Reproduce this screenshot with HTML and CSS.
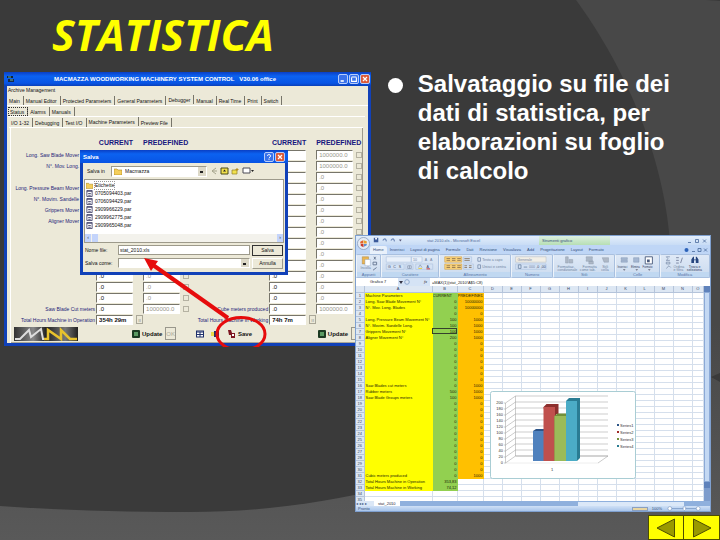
FILE: index.html
```html
<!DOCTYPE html>
<html lang="it">
<head>
<meta charset="utf-8">
<meta name="viewport" content="width=device-width, initial-scale=1">
<title>Statistica</title>
<link rel="stylesheet" href="styles.css">
</head>
<body>
<main class="slide">
  <svg class="backdrop" viewBox="0 0 720 540" preserveAspectRatio="none" aria-hidden="true">
    <defs>
      <linearGradient id="outer" x1="0" y1="0" x2="0" y2="1"><stop offset="0" stop-color="#484848"/><stop offset=".6" stop-color="#484848"/><stop offset="1" stop-color="#595959"/></linearGradient>
    </defs>
    <rect width="720" height="540" fill="url(#outer)"/>
    <path d="M0 0H576C620 60 671 160 671 270C671 400 430 512 190 512C120 512 60 510 0 506Z" fill="#3a3a3a"/>
    <path d="M706 0H720V1ZM711 377L720 373V382Z" fill="#3a3a3a"/>
  </svg>
  <h1 class="title">STATISTICA</h1>
  <ul class="notes"><li>Salvataggio su file dei dati di statistica, per elaborazioni su foglio di calcolo</li></ul>

  <section class="app">
    <header class="app-bar">
      <svg class="app-icon" viewBox="0 0 8 8"><path d="M0 1h6v2H0z" fill="#123"/><path d="M1 4h6v3H1z" fill="#152a4a"/><path d="M1 2h3M3 5h3" stroke="#6db5a0"/></svg>
      <h2>MACMAZZA WOODWORKING MACHINERY SYSTEM CONTROL &nbsp; V30.06 office</h2>
      <div class="win-buttons">
        <button type="button"><svg viewBox="0 0 10 10"><path d="M2 7.5h4" stroke="#fff" stroke-width="2"/></svg></button>
        <button type="button"><svg viewBox="0 0 10 10"><path d="M2 2.5h6M2 3v5h6V3" stroke="#fff" fill="none" stroke-width="1.4"/></svg></button>
        <button type="button" class="close"><svg viewBox="0 0 10 10"><path d="M2.5 2.5l5 5M7.500 2.500l-5 5" stroke="#fff" stroke-width="1.500"/></svg></button>
      </div>
    </header>
    <div class="menu">Archive Management</div>
    <nav class="tabs"><button type="button">Main</button><button type="button">Manual Editor</button><button type="button">Protected Parameters</button><button type="button">General Parameters</button><button type="button" class="on">Debugger</button><button type="button">Manual</button><button type="button">Real Time</button><button type="button">Print</button><button type="button">Switch</button></nav>
    <nav class="tabs sub"><button type="button" class="focus">Status</button><button type="button">Alarms</button><button type="button">Manuals</button></nav>
    <nav class="tabs sub2"><button type="button">I/O 1-32</button><button type="button">Debugging</button><button type="button">Test I/O</button><button type="button" class="on">Machine Parameters</button><button type="button">Preview File</button></nav>
    <div class="panel">
      <div class="pair heads"><div class="half"><b class="cur">CURRENT</b><b class="pre">PREDEFINED</b></div><div class="half"><b class="cur">CURRENT</b><b class="pre">PREDEFINED</b></div></div>
      <div id="params"></div>
      <footer class="actions">
        <svg class="logo" viewBox="0 0 64 14"><defs><linearGradient id="lg"><stop offset="0" stop-color="#333"/><stop offset=".3" stop-color="#888"/><stop offset=".5" stop-color="#222"/><stop offset=".8" stop-color="#777"/><stop offset="1" stop-color="#222"/></linearGradient></defs><rect width="64" height="14" fill="url(#lg)"/><path d="M1 12h5L15 3l2 7 10-8 2 10h4" fill="none" stroke="#ddd" stroke-width="2"/><path d="M30 12h4V3l13 9V3l9 9h7" fill="none" stroke="#e8c22c" stroke-width="2.500"/></svg>
        <button type="button" class="update"><svg viewBox="0 0 8 8"><rect width="8" height="8" rx="1" fill="#1c3a22"/><path d="M2 2h4v4H2z" fill="#5a9a62"/></svg>Update</button>
        <button type="button" class="ok" disabled>OK</button>
        <span class="tools"><svg viewBox="0 0 8 8"><rect x=".5" y="1" width="7" height="6" fill="#fff" stroke="#1d2f6b"/><path d="M0 2h8M1 4.500h6M4 2v5" stroke="#1d2f6b"/></svg><svg viewBox="0 0 8 8"><path d="M0 2h3v4H0z" fill="#ecd94a"/><path d="M3 1h5v6H3z" fill="#1d2f6b"/></svg></span>
        <button type="button" class="save"><svg viewBox="0 0 8 8"><path d="M0 0h3l1 3h3v5H3V5H1z" fill="#7d1520"/><path d="M4 4h2v2H4z" fill="#fff"/></svg>Save</button>
        <button type="button" class="update last"><svg viewBox="0 0 8 8"><rect width="8" height="8" rx="1" fill="#1c3a22"/><path d="M2 2h4v4H2z" fill="#5a9a62"/></svg>Update</button>
        <button type="button" class="ok" disabled></button>
      </footer>
    </div>

    <form class="dialog">
      <header class="dialog-bar"><h3>Salva</h3><div class="win-buttons"><button type="button"><svg viewBox="0 0 10 10"><path d="M3 3.500q0-1.500 2-1.500t2 1.500-2 2.500M5 7v1.500" fill="none" stroke="#fff" stroke-width="1.200"/></svg></button><button type="button" class="close"><svg viewBox="0 0 10 10"><path d="M2.500 2.500l5 5M7.500 2.500l-5 5" stroke="#fff" stroke-width="1.500"/></svg></button></div></header>
      <div class="where">
        <label for="folder">Salva in</label>
        <span class="pick"><svg class="folder" viewBox="0 0 8 7"><path d="M0 1h3l1 1h4v5H0z" fill="#f5cf5b" stroke="#a98520" stroke-width=".6"/></svg><select id="folder"><option>Macmazza</option></select></span>
        <svg class="nav-icons" viewBox="0 0 44 8"><path d="M5 1L1 4l4 3M1 4h5" stroke="#a6a58d" fill="none"/><path d="M10 1h7v6h-7z" fill="#f2e14c" stroke="#4a4a18"/><path d="M12 4.500l1.500-2 1.500 2z" fill="#222"/><path d="M21 3h5v4h-5z" fill="#f2e14c" stroke="#8f812c" stroke-width=".7"/><path d="M26 1v3M24.500 2.500h3" stroke="#b68f20"/><path d="M32 1h7v5h-7z" fill="#fff" stroke="#4a4a55"/><path d="M40 3h3l-1.500 2z" fill="#222"/></svg>
      </div>
      <div class="list">
        <ul id="files"></ul>
        <div class="hscroll"><i>‹</i><b></b><i class="end">›</i></div>
      </div>
      <div class="line"><label for="fname">Nome file:</label><input id="fname" type="text" value="stat_2010.xls"><button type="button" class="default">Salva</button></div>
      <div class="line"><label for="ftype">Salva come:</label><span class="pick wide"><select id="ftype"><option></option></select></span><button type="button">Annulla</button></div>
    </form>
    <svg class="pointer" viewBox="0 0 366 275" aria-hidden="true"><path d="M224 246L149 193" stroke="#e60c0c" stroke-width="4"/><path d="M140 186L154 189 147 199Z" fill="#e60c0c"/><ellipse cx="237" cy="262" rx="24" ry="16.500" fill="none" stroke="#e60c0c" stroke-width="3"/></svg>
  </section>

  <section class="excel">
    <header class="xl-title">
      <svg class="quick" viewBox="0 0 50 10"><path d="M17 2h5v5h-5z" fill="#3c5a9a"/><path d="M18.500 2h2v2h-2z" fill="#fff"/><path d="M27 5q3-4 4 1M36 5q3-4 4 1" fill="none" stroke="#6984b5" stroke-width="1.300"/><path d="M45 4h3l-1.500 2z" fill="#557"/></svg>
      <h2>stat 2010.xls - Microsoft Excel</h2>
      <span class="context">Strumenti grafico</span>
      <svg class="xl-win" viewBox="0 0 20 8"><path d="M1 5.500h3M8.500 2.500h3v3h-3zM16 2.500l3 3M19 2.500l-3 3" fill="none" stroke="#49699c" stroke-width=".8"/></svg>
    </header>
    <nav class="xl-tabs"><button type="button" class="on">Home</button><button type="button">Inserisci</button><button type="button">Layout di pagina</button><button type="button">Formule</button><button type="button">Dati</button><button type="button">Revisione</button><button type="button">Visualizza</button><button type="button">Add</button><button type="button">Progettazione</button><button type="button">Layout</button><button type="button">Formato</button>
      <svg viewBox="0 0 24 8"><circle cx="2.500" cy="4" r="2" fill="#2b62b8"/><path d="M8 5.500h3M14 2.500h3v3h-3zM20 2.500l3 3M23 2.500l-3 3" fill="none" stroke="#49699c" stroke-width=".8"/></svg></nav>
    <svg class="orb" viewBox="0 0 14 14" aria-hidden="true"><circle cx="7" cy="7" r="6.500" fill="#e5ebf4" stroke="#8497b5" stroke-width=".8"/><path d="M3.500 5l3-1.500v3.500h-3z" fill="#e5602a"/><path d="M7 3.500l3.500 1V7H7z" fill="#e9a12e"/><path d="M4 7.500h3V11L4 9.500z" fill="#c93a2a"/><path d="M7.500 7.500h3V9l-3 1.500z" fill="#5a8fd0"/></svg>
    <div class="ribbon">
      <div class="group g1"><div class="art"><svg viewBox="0 0 24 19"><path d="M5 2h7v8H5z" fill="#eab552" stroke="#a6803c" stroke-width=".5"/><path d="M8 5h6v7H8z" fill="#fff" stroke="#8aa0c0" stroke-width=".5"/><path d="M18 2l2 3M20 2l-2 3M17 8h4v3h-4zM17 17l4-3" stroke="#64748f" fill="none"/><text x="3" y="16">Incolla</text></svg></div><span>Appunti</span></div>
      <div class="group g2"><div class="art"><svg viewBox="0 0 57 19"><path d="M2 2h28v6H2zM30 2h12v6H30z" fill="#eaf1fa" stroke="#a7bedd" stroke-width=".6"/><text x="32" y="7">10</text><text x="45" y="7">A</text><text x="51" y="7">A</text><path d="M2 10h20v6H2zM24 10h8v6h-8zM35 10h19v6H35z" fill="#d4e2f4" stroke="#a7bedd" stroke-width=".6"/><text x="4" y="15" class="dk">G</text><text x="10" y="15" class="dk">C</text><text x="16" y="15" class="dk">S</text><path d="M26 12h4v3h-4zM28 12v3M38 14l2-3 2 3" stroke="#6c7c98" fill="none" stroke-width=".6"/><path d="M38 15h4" stroke="#edcf2a"/><text x="47" y="15" class="dk">A</text><path d="M47 15.500h4" stroke="#d02a2a"/></svg></div><span>Carattere</span></div>
      <div class="group g3"><div class="art"><svg viewBox="0 0 72 19"><path d="M2 2h19v6H2zM2 10h19v6H2z" fill="#fbd47c" stroke="#d09b3d" stroke-width=".6"/><path d="M23 2h9v6h-9zM23 10h11v6H23z" fill="#d4e2f4" stroke="#a7bedd" stroke-width=".6"/><path d="M4 4h4M4 6h4M10 4h4M10 6h4M16 4h4M16 6h4M4 12h4M4 14h4M10 12h4M10 14h4M16 12h4M16 14h4M24 4h6M24 6h6M24 12h3M24 14h3M29 12h3M29 14h3" stroke="#775f43" stroke-width=".8"/><path d="M39 3h3v4h-3zM39 11h3v4h-3z" fill="none" stroke="#8296b5"/><text x="44" y="7">Testo a capo</text><text x="44" y="15">Unisci e centra</text></svg></div><span>Allineamento</span></div>
      <div class="group g4"><div class="art"><svg viewBox="0 0 40 19"><path d="M2 2h34v6H2z" fill="#f2efe7" stroke="#b8bcc2" stroke-width=".6"/><text x="4" y="7">Generale</text><path d="M2 10h34v6H2z" fill="#d4e2f4" stroke="#a7bedd" stroke-width=".6"/><path d="M5 11v4h3v-4zM11 13.500h4" fill="none" stroke="#748ba9"/><text x="17" y="15">000</text><text x="25" y="15" class="dk">,0</text><text x="30" y="15" class="dk">,00</text></svg></div><span>Numero</span></div>
      <div class="group g5"><div class="art"><svg viewBox="0 0 62 19"><path d="M10 2h3v7h-3zM14 5h4v4h-4zM33 2h7v2h-7zM33 5h7v2h-7zM36 7h5v3h-5zM51 3h7v5h-5z" fill="#aeb8c6" stroke="#8c99ac" stroke-width=".5"/><text x="1" y="14">Formattaz.</text><text x="1" y="18">condizionale</text><text x="29" y="14">Formatta</text><text x="26" y="18">come tab.</text><text x="51" y="14">Stili</text><text x="50" y="18">cella</text></svg></div><span>Stili</span></div>
      <div class="group g6"><div class="art"><svg viewBox="0 0 44 19"><path d="M4 3h7v2H4zM4 6h7v2H4zM18 3h6v5h-6z" fill="#a5b7d2" stroke="#7e92b0" stroke-width=".5"/><path d="M31 2h8v8h-8z" fill="#fff" stroke="#47587a"/><path d="M33 5h3v3h-3z" fill="#47587a"/><text x="0" y="14" class="sm">Inserisci</text><text x="15" y="14" class="sm">Elimina</text><text x="28" y="14" class="sm">Formato</text><path d="M6 16h3l-1.500 1.500zM20 16h3l-1.500 1.500zM34 16h3l-1.500 1.500z" fill="#667"/></svg></div><span>Celle</span></div>
      <div class="group g7"><div class="art"><svg viewBox="0 0 48 19"><path d="M7 2H3l2 2-2 2h4M3 8h4v2H3zM3 15l3-3 2 2" fill="none" stroke="#7487a4" stroke-width=".8"/><path d="M14 3h3M14 6h3M14 9h3M21 3l-2 6" stroke="#75809b"/><path d="M31 9V5l2-3h1v3h2V2h1l2 3v4h-3V6h-2v3z" fill="#27467f"/><text x="11" y="14">Ordina</text><text x="11" y="18">e filtra</text><text x="28" y="14" class="dk">Trova e</text><text x="26" y="18" class="dk">seleziona</text></svg></div><span>Modifica</span></div>
    </div>
    <div class="formula"><label class="namebox" for="fx">Grafico 7</label><span class="fx"><svg viewBox="0 0 6 6"><path d="M1 2h4L3 5z" fill="#334"/></svg><svg viewBox="0 0 6 6"><circle cx="3" cy="3" r="2.300" fill="#dbe6f5" stroke="#8ba5cb"/></svg><em>fx</em></span><input id="fx" type="text" value="=MAX(1)(stat_2010!A$5:C8)"></div>
    <div class="work">
      <div class="sheet-wrap">
        <table class="sheet"><colgroup><col class="c-row"><col class="c-a"><col class="c-b"><col class="c-c"><col span="11" class="c-n"><col></colgroup><thead id="cols"></thead><tbody id="cells"></tbody></table>
        <svg class="chart" viewBox="0 0 146 88">
          <rect x=".5" y=".5" width="145" height="87" rx="2" fill="#fff" stroke="#a9cdd4"/>
          <g id="axis"></g>
          <path d="M15.500 12V72M25.500 5V65H118L108 72" fill="none" stroke="#999" stroke-width=".5"/>
          <path d="M15.500 72H108" stroke="#bbb" stroke-width=".5" stroke-dasharray="1 1"/>
          <path d="M43 40l3-2h10v30H43z" fill="#2c5488"/><path d="M43 40h11v30H43z" fill="#4f81bd"/>
          <path d="M53.500 16l3-3h12v10H66l-3 46z" fill="#8c2f2d"/><path d="M53.500 16H65v54H53.500z" fill="#c0504d"/>
          <path d="M64.500 25l3-2.500H80V70H64.500z" fill="#72903a"/><path d="M64.500 25H76v45H64.500z" fill="#9bbb59"/>
          <path d="M76 10l3-3h11v60l-3 3H76z" fill="#2a7c93"/><path d="M76 10h11v60H76z" fill="#4bacc6"/>
          <text x="61" y="80">1</text>
          <path d="M127 33h2v2h-2z" fill="#2c5488"/><path d="M127 40h2v2h-2z" fill="#a02c2a"/><path d="M127 47h2v2h-2z" fill="#72903a"/><path d="M127 54h2v2h-2z" fill="#2a7c93"/>
          <text x="130" y="36">Series1</text><text x="130" y="43">Series2</text><text x="130" y="50">Series3</text><text x="130" y="57">Series4</text>
        </svg>
      </div>
      <div class="vscroll"><i></i><b></b><i></i></div>
    </div>
    <div class="sheet-tabs"><span>◂ ◂ ▸ ▸</span><button type="button">stat_2010</button><b></b></div>
    <footer class="status"><span>Pronto</span><i></i><span class="zoom">100%</span><svg viewBox="0 0 40 6"><path d="M2 3h36" stroke="#7f9dc8"/><circle cx="3" cy="3" r="2.300" fill="#fff" stroke="#6f8fbd" stroke-width=".7"/><path d="M19 1h3v3l-1.500 1.500L19 4z" fill="#fff" stroke="#6f8fbd" stroke-width=".6"/><circle cx="37" cy="3" r="2.300" fill="#fff" stroke="#6f8fbd" stroke-width=".7"/></svg></footer>
  </section>

  <nav class="pager"><button type="button"><svg viewBox="0 0 20 20"><path d="M18.500 1v18L1 10z" fill="#990" stroke="#4d4d00"/></svg></button><button type="button"><svg viewBox="0 0 20 20"><path d="M1.500 1v18L19 10z" fill="#990" stroke="#4d4d00"/></svg></button></nav>
</main>
<script src="script.js"></script>
</body>
</html>
```
FILE: styles.css
```css
* { box-sizing: border-box; }
body { margin: 0; background: #3a3a3a; }
h1, h2, h3, ul { margin: 0; padding: 0; }
button, input, select { font: inherit; color: inherit; margin: 0; padding: 0; border: 0; border-radius: 0; min-width: 0; }
svg { display: block; }

.slide { position: relative; min-height: 100vh; overflow: hidden; font-family: "Liberation Sans", Arial, sans-serif; }
.backdrop { position: absolute; inset: 0; width: 100%; height: 100%; }
.title { position: relative; padding: 7px 0 0 52px; font: italic bold 43px/56px "Open Sans", sans-serif; color: #ff0; }
.notes { position: relative; width: 46%; margin: 6px 0 0 auto; padding: 0 38px 0 29px; list-style: none; }
.notes li { position: relative; font-weight: bold; font-size: 24px; line-height: 29px; color: #fff; }
.notes li::before { content: ""; position: absolute; left: -30px; top: 9px; width: 15px; height: 15px; border-radius: 50%; background: #fff; }

/* machine control window */
.app { position: absolute; left: 4px; top: 72px; width: 51%; border: 3px solid #1141b8; border-top: 0; background: #ece9d8; font: 5px/8px "Liberation Sans", Arial, sans-serif; color: #111; }
.app-bar { display: flex; align-items: center; height: 14px; margin: 0 -3px; padding: 0 1px 0 3px; background: linear-gradient(#0a3fc4, #0c62f0 30%, #0854e4 80%, #0a3fb8); color: #fff; }
.app-bar h2 { flex: 1; padding-left: 39px; font-size: 6px; white-space: nowrap; }
.app-icon { width: 8px; height: 8px; }
.win-buttons { display: flex; gap: 1px; }
.win-buttons button { width: 10px; height: 10px; border: 1px solid #b8cdfa; border-radius: 2px; background: #3a72ea; }
.win-buttons .close { background: #dc5a38; }
.menu { height: 9px; padding-left: 1px; }
.tabs { display: flex; height: 11px; border-bottom: 1px solid #fff; }
.tabs.sub { margin: 0 3px 0 1px; }
.tabs.sub2 { margin: 0 5px 0 2px; }
.tabs button { padding: 0 3px 0 2px; background: none; border-right: 1px solid #77756a; line-height: 8px; margin-top: 1px; height: 9px; white-space: nowrap; }
.tabs .on { margin-top: 0; }
.tabs .focus { outline: 1px dotted #333; outline-offset: -1px; }
.panel { margin: 0 5px 0 3px; border-left: 1px solid #fff; border-right: 1px solid #9d9a8b; }
.pair { display: flex; height: 11px; }
.half { flex: 178; display: grid; grid-template-columns: minmax(0, 1fr) 37px 10px 37px 3px 6px; align-items: center; }
.half + .half { flex: 173; }
.half label { padding-right: 1px; color: #1d1d78; text-align: right; white-space: nowrap; }
.half .short { padding-right: 17px; }
.cur { grid-column: 2; }
.pre { grid-column: 4; }
.half input[type=text] { width: 100%; height: 10px; padding: 0 2px; background: #fff; border: 1px solid #fff; border-top-color: #77756a; border-left-color: #77756a; font-size: 6px; }
.half .pre { color: #99978c; }
.half .time { font-weight: bold; }
.half input[type=checkbox] { grid-column: 6; appearance: none; width: 6px; height: 6px; border: 1px solid #b5b2a2; }
.half .more { grid-column: 3; justify-self: end; width: 7px; height: 9px; border: 1px solid #aaa798; background: #ece9d8; color: #888; }
.heads { height: 21px; padding-top: 8px; color: #16167e; font: bold 7px/12px "Liberation Sans", sans-serif; }
.heads .half .pre { color: #16167e; white-space: nowrap; }
.heads .cur { justify-self: end; }
.actions { display: flex; align-items: center; height: 18px; padding-left: 3px; border-bottom: 1px solid #aaa798; overflow: hidden; }
.actions button { background: none; white-space: nowrap; display: flex; align-items: center; gap: 2px; font-weight: bold; font-size: 6px; flex: none; }
.actions svg { width: 8px; height: 8px; flex: none; }
.actions .logo { width: 64px; height: 14px; }
.update { margin-left: 54px; }
.actions .ok { margin-left: 3px; border: 1px solid #99978c; height: 13px; min-width: 10px; color: #aaa798; font-weight: normal; }
.tools { display: flex; gap: 7px; margin-left: 20px; }
.actions .save { margin-left: 9px; }
.actions .last { margin-left: auto; }
.actions .last + .ok { margin-right: 1px; }

/* file dialog */
.dialog { position: absolute; left: 73px; top: 78px; width: 208px; border: 3px solid #1141b8; border-top: 0; background: #ece9d8; }
.dialog-bar { display: flex; justify-content: space-between; align-items: center; height: 13px; margin: 0 -3px; padding: 0 3px; background: linear-gradient(#0a3fc4, #0c62f0 30%, #0854e4); color: #fff; }
.dialog-bar h3 { font-size: 6px; }
.where { display: flex; align-items: center; height: 16px; padding-left: 4px; }
.where label { width: 24px; }
.pick { display: flex; align-items: center; width: 96px; height: 11px; background: #fff; border: 1px solid #9d9a8b; border-right-color: #fff; border-bottom-color: #fff; padding-left: 2px; }
.folder { width: 8px; height: 7px; flex: none; margin-right: 3px; }
.pick select { flex: 1; appearance: none; height: 9px; line-height: 9px; background: linear-gradient(#222, #222) calc(100% - 3px) 4px / 3px 2px no-repeat, linear-gradient(#ddd9c8, #ddd9c8) 100% 0 / 8px 9px no-repeat; }
.pick.wide { width: auto; height: 10px; }
.pick.wide select { height: 8px; }
.nav-icons { width: 44px; height: 8px; margin-left: 4px; }
.list { height: 64px; margin: 0 1px; display: flex; flex-direction: column; justify-content: space-between; background: #fff; border: 1px solid #9d9a8b; }
.list ul { list-style: none; padding-top: 1px; }
.list li { display: flex; align-items: center; gap: 2px; height: 8px; padding-left: 1px; }
.list li svg { width: 7px; height: 7px; }
.list li:first-child span { outline: 1px dotted #999; line-height: 7px; }
.hscroll { display: flex; gap: 1px; height: 8px; background: #f3f2ec; }
.hscroll i, .hscroll b { width: 6px; background: #c4d4fb; color: #234; font-style: normal; text-align: center; line-height: 7px; }
.hscroll .end { margin-left: auto; }
.line { display: grid; grid-template-columns: 31px 1fr 31px; column-gap: 2px; align-items: center; height: 14px; padding: 0 2px; white-space: nowrap; }
.line:last-child { height: 15px; padding-bottom: 3px; }
.line input { height: 10px; background: #fff; border: 1px solid #9d9a8b; padding-left: 1px; }
.line button { height: 11px; border: 1px solid #9d9a8b; border-top-color: #fff; border-left-color: #fff; background: #ece9d8; line-height: 8px; }
.line .default { border-color: #333; }
.pointer { position: absolute; left: -3px; top: 0; width: 366px; height: 275px; pointer-events: none; }

/* spreadsheet window */
.excel { position: absolute; left: 355px; top: 235px; right: 9px; border: 1px solid #7fa0cf; background: #cfdff3; font: 4px/6px "Liberation Sans", Arial, sans-serif; color: #34507c; }
.xl-title { display: flex; height: 9px; align-items: center; background: linear-gradient(#e3eefb, #c8dcf5); }
.xl-title h2 { font-weight: normal; font-size: 4px; margin-left: 21px; color: #4b689a; white-space: nowrap; }
.quick { width: 50px; height: 9px; }
.context { margin-left: auto; width: 71px; height: 9px; padding: 2px 3px 0; background: linear-gradient(#dcefe0, #b7dfb4); }
.xl-win { width: 20px; height: 8px; margin: 0 3px 0 77px; }
.xl-tabs { display: flex; align-items: center; height: 9px; padding-left: 14px; background: #bfd6f6; white-space: nowrap; }
.xl-tabs button { background: none; height: 8px; padding: 0 3px; }
.xl-tabs .on { background: #e9f1fb; border-radius: 2px 2px 0 0; }
.xl-tabs svg { width: 24px; height: 8px; margin: 0 2px 0 auto; }
.orb { position: absolute; left: 1px; top: 1px; width: 13px; height: 13px; }
.ribbon { display: flex; height: 24px; background: #bfd3ec; }
.group { display: flex; flex-direction: column; border: 1px solid #a9c0df; border-left-color: #eef4fb; border-radius: 2px; background: linear-gradient(#dfe9f6, #cbdbef); overflow: hidden; }
.group .art { flex: 1; }
.group .art svg { height: 17px; width: 100%; }
.group text { font: 4px "Liberation Sans", Arial, sans-serif; fill: #70829f; }
.group .dk { fill: #32405e; }
.group .sm { font-size: 3px; fill: #32405e; }
.group span { height: 5px; line-height: 5px; background: #c0d8f1; text-align: center; color: #5674a5; }
.g1 { flex: 24; } .g2 { flex: 58; } .g3 { flex: 73; } .g4 { flex: 41; } .g5 { flex: 63; } .g6 { flex: 44; } .g7 { flex: 50; }
.formula { display: flex; align-items: center; height: 8px; background: #fff; color: #222; }
.namebox { width: 42px; padding-left: 14px; white-space: nowrap; }
.fx { display: flex; align-items: center; width: 32px; height: 8px; background: #d5e3f5; }
.fx svg { width: 6px; height: 6px; }
.fx em { margin-left: auto; padding-right: 3px; font-family: "Liberation Serif", serif; }
.formula input { flex: 1; height: 8px; padding-left: 2px; background: none; }
.work { display: flex; height: 215px; }
.sheet-wrap { position: relative; flex: 1; min-width: 0; overflow: hidden; background: #fff; }
.sheet { width: 100%; table-layout: fixed; border-collapse: collapse; line-height: 5px; color: #1b1b08; }
.c-row { width: 8px; } .c-a { width: 68px; } .c-b { width: 25px; } .c-c { width: 26px; } .c-n { width: 19px; }
.sheet th, .sheet td { height: 6px; padding: 0; overflow: hidden; white-space: nowrap; border: 0 solid #d5dfec; border-width: 0 1px 1px 0; }
.sheet th { background: #dde7f3; border-color: #b5c4da; font-weight: normal; color: #33445f; text-align: center; }
.sheet td.a { background: #ff0; border-color: #ff0; padding-left: 1px; }
.sheet td.b { background: #92d050; border-color: #92d050; text-align: right; }
.sheet td.c { background: #ffc000; border-color: #ffc000; text-align: right; }
.sheet td.head { text-align: left; }
.sheet td.sel { outline: 1px solid #35402c; outline-offset: -1px; }
.chart { position: absolute; left: 134px; top: 105px; width: 146px; height: 88px; }
.chart text { font: 4px "Liberation Sans", sans-serif; fill: #333; }
.chart .tick { text-anchor: end; }
.vscroll { display: flex; flex-direction: column; width: 6px; background: #7d9ccc; }
.vscroll i { height: 6px; background: #5f82bb; }
.vscroll b { height: 190px; background: #c3d8f3; border: 1px solid #8ba9d6; }
.sheet-tabs { display: flex; align-items: center; height: 5px; background: #8fb0dd; line-height: 5px; }
.sheet-tabs span { width: 18px; background: #dbe7f6; white-space: nowrap; overflow: hidden; }
.sheet-tabs button { height: 5px; line-height: 5px; padding: 0 4px; background: #fff; color: #223; }
.sheet-tabs b { margin: 0 26px 0 auto; width: 106px; height: 4px; background: #dbe8f8; }
.status { display: flex; align-items: center; height: 5px; line-height: 5px; padding: 0 6px 0 2px; background: linear-gradient(#cfe0f6, #a9c5ea); }
.status i { margin-left: auto; width: 16px; height: 4px; background: #e8d6a2; border: 1px solid #8ba0c0; }
.status .zoom { margin: 0 2px 0 4px; }
.status svg { width: 40px; height: 5px; }

.pager { position: absolute; right: 0; bottom: 0; display: flex; height: 25px; }
.pager button { display: grid; place-items: center; width: 36px; background: #ff0; border: 1px solid #4d4d00; }
.pager button + button { border-left: 0; }
.pager svg { width: 20px; height: 20px; }
```
FILE: script.js
```js
const labels = {
  0: "Long. Saw Blade Mover", 1: "N°. Mov. Long.", 3: "Long. Pressure Beam Mover",
  4: "N°. Movim. Sandelle", 5: "Grippers Mover", 6: "Aligner Mover",
  14: "Saw Blade Cut meters", 15: "Total Hours Machine in Operation"
};
const labelsRight = { 14: "Cube meters produced", 15: "Total Hours Machine in Working" };
const times = ["354h 29m", "74h 7m"];

function half(row, side, names) {
  const id = "p" + side + "-" + row;
  const label = `<label for="${id}"${row < 14 ? ' class="short"' : ""}>${names[row] || ""}</label>`;
  if (row === 15) {
    return `<div class="half">${label}<input type="text" class="cur time" id="${id}" value="${times[side]}"><button type="button" class="more">ıı</button></div>`;
  }
  const limit = row < 2 || row === 14 ? "1000000.0" : ".0";
  return `<div class="half">${label}<input type="text" class="cur" id="${id}" value=".0">` +
    `<input type="text" class="pre" value="${limit}"><input type="checkbox"></div>`;
}
let rows = "";
for (let r = 0; r < 16; r++) rows += `<div class="pair">${half(r, 0, labels)}${half(r, 1, labelsRight)}</div>`;
document.getElementById("params").innerHTML = rows;

const folder = '<svg viewBox="0 0 8 7"><path d="M0 1h3l1 1h4v5H0z" fill="#f5cf5b" stroke="#a98520" stroke-width=".6"/></svg>';
const file = '<svg viewBox="0 0 8 8"><path d="M1 .5h6v7H1z" fill="#fff" stroke="#44446c"/><path d="M1 1.500h6M2.500 4h3M2.500 6h3" stroke="#44446c"/></svg>';
document.getElementById("files").innerHTML =
  ["Etichette", "0705094403.par", "0706094429.par", "2909966229.par", "2909962775.par", "2909965048.par"]
    .map((name, i) => `<li>${i ? file : folder}<span>${name}</span></li>`).join("");

const data = {
  1: ["Machine Parameters", "CURRENT", "PREDEFINED"],
  2: ["Long. Saw Blade Movement N°", "0", "10000000"],
  3: ["N°. Mov. Long. Blades", "0", "10000000"],
  4: ["", "0", "0"],
  5: ["Long. Pressure Beam Movement N°", "100", "1000"],
  6: ["N°. Movim. Sandelle Long.", "100", "1000"],
  7: ["Grippers Movement N°", "100", "1000"],
  8: ["Aligner Movement N°", "200", "1000"],
  16: ["Saw Blades cut meters", "0", "1000"],
  17: ["Rubber meters", "500", "1000"],
  18: ["Saw Blade Groups meters", "100", "1000"],
  31: ["Cubic meters produced", "0", "1000"],
  32: ["Total Hours Machine in Operation", "353,83", null],
  33: ["Total Hours Machine in Working", "74,12", null]
};
document.getElementById("cols").innerHTML =
  "<tr><th></th>" + [..."ABCDEFGHIJKLMNO"].map(c => `<th>${c}</th>`).join("") + "</tr>";
let body = "";
for (let r = 1; r <= 35; r++) {
  const [a, b, c] = data[r] || ["", "0", "0"];
  const head = r === 1 ? " head" : "";
  body += `<tr><th>${r}</th>`;
  body += r < 34 ? `<td class="a">${a}</td><td class="b${head}${r === 7 ? " sel" : ""}">${b}</td>` : "<td></td><td></td>";
  body += c === null || r > 33 ? "<td></td>" : `<td class="c${head}">${c}</td>`;
  body += "<td></td>".repeat(12) + "</tr>";
}
document.getElementById("cells").innerHTML = body;

let axis = "";
for (let i = 0; i <= 10; i++) {
  const y = 72 - i * 6;
  axis += `<text class="tick" x="13" y="${y + 1}">${i * 20}</text>` +
    `<path d="M14 ${y}H15.500L25.500 ${y - 7}H118" fill="none" stroke="#999" stroke-width=".5"/>`;
}
document.getElementById("axis").innerHTML = axis;
```
